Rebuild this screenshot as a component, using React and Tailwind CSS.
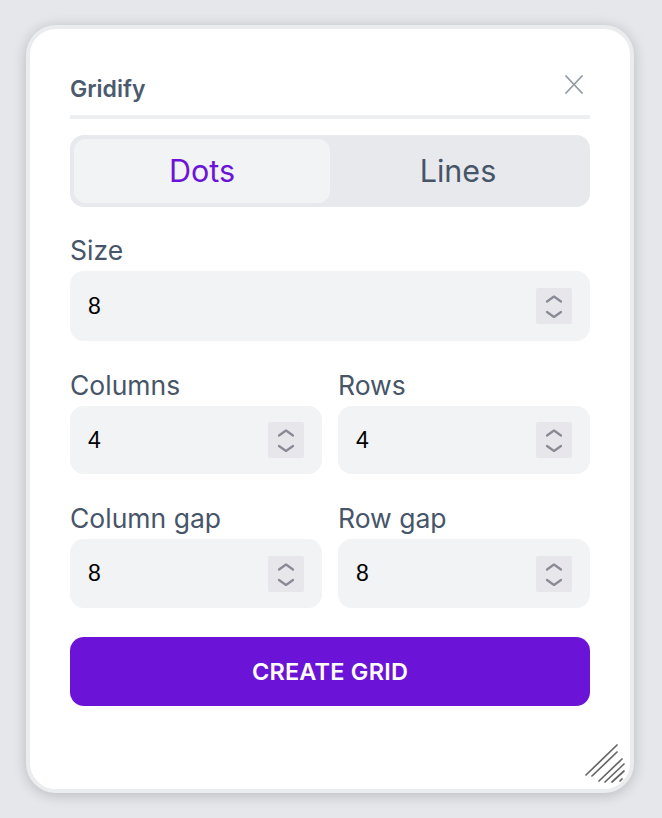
import React from "react";

const FONT = { fontFamily: "Inter, 'Noto Sans', sans-serif" };

function Spinner() {
  return (
    <div className="w-[36px] h-[36px] bg-[#e6e6eb] rounded-[2px] flex items-center justify-center">
      <svg width="36" height="36" viewBox="0 0 36 36" fill="none">
        <path d="M11 13.5 L18 8.5 L25 13.5" stroke="#8a8a96" strokeWidth="2.2" strokeLinecap="round" strokeLinejoin="round" />
        <path d="M11 24 L18 29 L25 24" stroke="#8a8a96" strokeWidth="2.2" strokeLinecap="round" strokeLinejoin="round" />
      </svg>
    </div>
  );
}

function Field({ label, value, h = 69 }) {
  return (
    <div className="flex flex-col">
      <div className="text-[26.5px] leading-[32px] text-[#475569] mb-[5px]" style={FONT}>{label}</div>
      <div
        className="bg-[#f2f3f5] rounded-[14px] flex items-center justify-between pl-[18px] pr-[18px]"
        style={{ height: h }}
      >
        <span className="text-[23px] text-black" style={{ fontFamily: "'Liberation Sans', Arial, sans-serif" }}>{value}</span>
        <Spinner />
      </div>
    </div>
  );
}

export default function App() {
  return (
    <div className="w-[662px] h-[818px] bg-[#e5e7eb] pt-[25px] pl-[26px]" style={FONT}>
      <div className="relative w-[608px] h-[768px] rounded-[30px] border-4 border-[#ebecee] bg-white shadow-[0_2px_14px_rgba(0,0,0,0.2)] px-[40px] pt-[46px]">
        <div className="flex justify-between items-start">
          <div className="text-[23px] leading-[28px] font-semibold text-[#4b5a6e]">Gridify</div>
          <svg width="18" height="19" viewBox="0 0 18 19" className="mr-[7px]">
            <path d="M1 1 L17 18 M17 1 L1 18" stroke="#939ba3" strokeWidth="1.8" strokeLinecap="round" />
          </svg>
        </div>
        <div className="h-[4px] bg-[#eeeff1] mt-[12px]" />
        <div className="mt-[16px] h-[72px] bg-[#e8e9ed] rounded-[14px] p-[4px] flex">
          <div className="flex-1 bg-[#f2f3f5] rounded-[12px] flex items-center justify-center text-[30.5px] text-[#6b13d7]">Dots</div>
          <div className="flex-1 flex items-center justify-center text-[30.5px] text-[#475569]">Lines</div>
        </div>
        <div className="mt-[27px]">
          <Field label="Size" value="8" h={70} />
        </div>
        <div className="mt-[28px] grid grid-cols-2 gap-x-[16px]">
          <Field label="Columns" value="4" h={68} />
          <Field label="Rows" value="4" h={68} />
        </div>
        <div className="mt-[28px] grid grid-cols-2 gap-x-[16px]">
          <Field label="Column gap" value="8" h={69} />
          <Field label="Row gap" value="8" h={69} />
        </div>
        <button className="mt-[29px] w-full h-[69px] bg-[#6b13d7] rounded-[14px] text-white text-[23.5px] font-semibold tracking-[0.2px]">
          CREATE GRID
        </button>
        <svg className="absolute right-[2px] bottom-[2px]" width="44" height="44" viewBox="0 0 44 44">
          <g stroke="#666666" strokeWidth="1.7" strokeLinecap="round">
            <line x1="2" y1="32" x2="33" y2="2" />
            <line x1="8" y1="33" x2="33" y2="9" />
            <line x1="15" y1="38" x2="38" y2="16" />
            <line x1="21" y1="39" x2="40" y2="21" />
            <line x1="28" y1="39" x2="40" y2="28" />
            <line x1="36" y1="38" x2="38" y2="36" />
          </g>
        </svg>
      </div>
    </div>
  );
}
